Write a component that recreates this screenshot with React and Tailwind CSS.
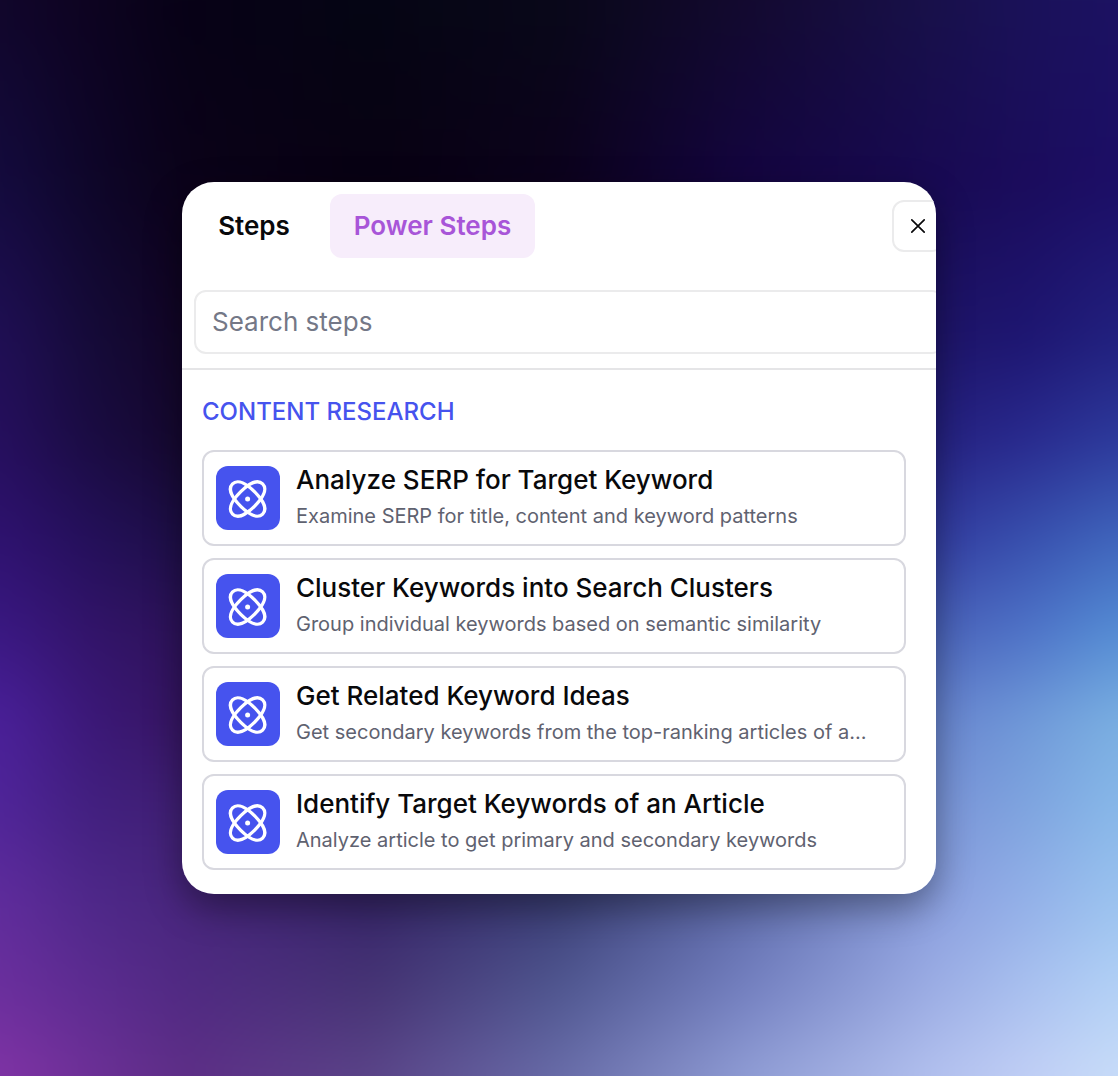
const rows = [
  { y: 0, c: ["#11062b", "#0d0320", "#070216", "#050614", "#090819", "#130a2f", "#18114a", "#1a1259", "#1c1262"] },
  { y: 180, c: ["#140b3e", "#0e0629", "#0b0219", "#080112", "#0c021c", "#140540", "#180a52", "#1b0c5c", "#1c0e66"] },
  { y: 340, c: ["#200f55", "#150b38", "#120526", "#0b0320", "#0f0628", "#160a48", "#1e1568", "#1e1672", "#22217f"] },
  { y: 440, c: ["#260f5e", "#1a0c42", "#15082e", "#0e0626", "#150c34", "#1a1254", "#252180", "#292a8e", "#2d3a9c"] },
  { y: 540, c: ["#2f1270", "#24105a", "#1d0f46", "#150c38", "#1a1444", "#262472", "#333ca0", "#3850ae", "#4066bd"] },
  { y: 630, c: ["#3a1882", "#321469", "#2d1359", "#1e1344", "#22204f", "#34408c", "#4a62b8", "#4e72c7", "#548cd4"] },
  { y: 720, c: ["#4a2099", "#3b1877", "#361562", "#281850", "#2a2c60", "#46559c", "#6884ce", "#6f98d8", "#7aafe1"] },
  { y: 810, c: ["#502599", "#42207f", "#402074", "#2f1e5c", "#343a72", "#5463a8", "#7a93d6", "#7fa4df", "#88b8e9"] },
  { y: 900, c: ["#5f2c9c", "#4e2889", "#48267d", "#37266a", "#3c4078", "#606dac", "#8a9ede", "#93b0e8", "#9bc3ef"] },
  { y: 990, c: ["#6b2f9d", "#5c2c90", "#502a82", "#463474", "#505790", "#7480c0", "#9cade4", "#a9c0ef", "#b3d1f6"] },
  { y: 1076, c: ["#8033a5", "#6c3096", "#5d2e86", "#5a4488", "#686ca8", "#8f9cd4", "#b2c0ee", "#c0cef5", "#c8dcf8"] },
];

const columns = [0, 93, 186, 372, 559, 745, 932, 1025, 1118];

// The mesh bleeds past the viewport so that blurring it leaves no soft edge.
const BLEED = 60;

function rowStyle(row, i) {
  const style = {
    backgroundImage: `linear-gradient(to right, ${row.c.map((c, n) => `${c} ${columns[n] + BLEED}px`).join(", ")})`,
  };
  if (i > 0) {
    style.maskImage = `linear-gradient(to bottom, transparent ${rows[i - 1].y + BLEED}px, black ${row.y + BLEED}px)`;
  }
  return style;
}

function MeshBackground() {
  return (
    <div className="absolute -inset-[60px] blur-[18px]" aria-hidden="true">
      {rows.map((row, i) => (
        <div key={row.y} className="absolute inset-0" style={rowStyle(row, i)} />
      ))}
    </div>
  );
}

const ORBIT = "M-21.3 0C-21.3 -7.5 -11 -10 0 -10S21.3 -7.5 21.3 0 11 10 0 10 -21.3 7.5 -21.3 0Z";

function OrbitIcon() {
  return (
    <svg viewBox="0 0 64 64" className="size-16" fill="none" stroke="white" strokeWidth="3.3">
      <path d={ORBIT} transform="translate(31.6 33) rotate(45)" />
      <path d={ORBIT} transform="translate(31.6 33) rotate(-45)" />
      <circle cx="31.6" cy="33" r="2.5" fill="white" stroke="none" />
    </svg>
  );
}

function CloseIcon() {
  return (
    <svg viewBox="0 0 16 16" className="size-4" fill="none" stroke="#09090b" strokeWidth="1.7" strokeLinecap="round">
      <path d="M1.8 1.8 14.2 14.2M14.2 1.8 1.8 14.2" />
    </svg>
  );
}

const steps = [
  ["Analyze SERP for Target Keyword", "Examine SERP for title, content and keyword patterns"],
  ["Cluster Keywords into Search Clusters", "Group individual keywords based on semantic similarity"],
  ["Get Related Keyword Ideas", "Get secondary keywords from the top-ranking articles of a..."],
  ["Identify Target Keywords of an Article", "Analyze article to get primary and secondary keywords"],
];

function StepCard({ title, description }) {
  return (
    <li className="flex h-24 items-center gap-4 rounded-xl border-2 border-[#d8d8df] px-3">
      <div className="size-16 shrink-0 rounded-xl bg-[#4653ee]">
        <OrbitIcon />
      </div>
      <div className="min-w-0 flex-1 whitespace-nowrap">
        <h3 className="text-[26px] leading-9 font-medium text-[#09090b]">{title}</h3>
        <p className="text-[20px] leading-9 text-[#5f6270]">{description}</p>
      </div>
    </li>
  );
}

export default function App() {
  return (
    <main className="relative flex h-[1076px] w-[1118px] items-center justify-center overflow-hidden font-['Inter',sans-serif]">
      <MeshBackground />
      <section className="relative h-[712px] w-[754px] rounded-[32px] shadow-[0_14px_36px_rgba(0,0,0,0.38)]">
        <div className="h-full overflow-hidden rounded-[32px] bg-white">
          <header className="h-[188px] w-[776px] border-b-2 border-[#e5e5e7] px-3 pt-3">
            <div className="flex h-16 items-center justify-between">
              <nav className="flex h-full gap-4">
                <button className="w-[120px] rounded-xl pb-0.5 text-center text-[26px] font-semibold text-[#09090b]">Steps</button>
                <button className="w-[205px] rounded-xl bg-[#f7edfb] pb-0.5 text-center text-[26px] font-semibold text-[#a855d8]">Power Steps</button>
              </nav>
              <button className="mr-0.5 flex size-[52px] items-center justify-center rounded-xl border-2 border-[#ebebec]" aria-label="Close">
                <CloseIcon />
              </button>
            </div>
            <input
              placeholder="Search steps"
              className="mt-8 h-16 w-[750px] rounded-xl border-2 border-[#ebebec] px-4 pb-0.5 text-[26px] outline-none placeholder:text-[#747887]"
            />
          </header>
          <div className="px-5 pt-[26px]">
            <h2 className="text-[24px] leading-8 font-medium text-[#4653ee]">CONTENT RESEARCH</h2>
            <ul className="mt-[22px] flex w-[704px] flex-col gap-3">
              {steps.map(([title, description]) => (
                <StepCard key={title} title={title} description={description} />
              ))}
            </ul>
          </div>
        </div>
      </section>
    </main>
  );
}
